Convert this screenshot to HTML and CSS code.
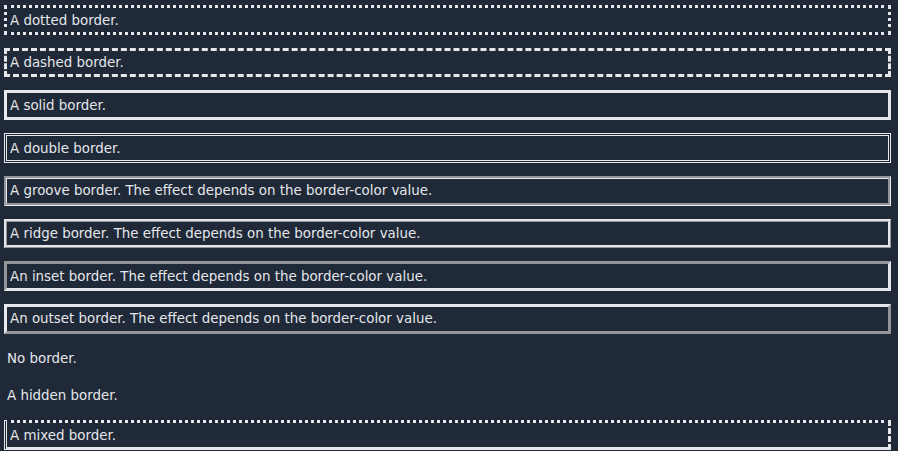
FILE: index.html
```
<!DOCTYPE html>
<html>
<head>
<meta charset="utf-8">
<link rel="stylesheet" href="styles.css">
</head>
<body>
<div class="list">
<p class="box dotted">A dotted border.</p>
<p class="box dashed">A dashed border.</p>
<p class="box solid">A solid border.</p>
<p class="box double">A double border.</p>
<p class="box groove">A groove border. The effect depends on the border-color value.</p>
<p class="box ridge">A ridge border. The effect depends on the border-color value.</p>
<p class="box inset">An inset border. The effect depends on the border-color value.</p>
<p class="box outset">An outset border. The effect depends on the border-color value.</p>
<p class="box none">No border.</p>
<p class="box hidden">A hidden border.</p>
<p class="box mix">A mixed border.</p>
</div>
</body>
</html>
```
FILE: styles.css
```
html, body {
  margin: 0;
  background: #1f2937;
}
body {
  font-family: "DejaVu Sans", Verdana, sans-serif;
  font-size: 13.4px;
  line-height: 17.7px;
  color: #e5e7eb;
}
.list {
  display: flex;
  flex-direction: column;
  gap: 13px;
  padding: 5px 7px 0 4px;
}
.box {
  margin: 0;
  padding: 3.5px 3px 2.5px;
  border: 3px solid #e5e7eb;
}
.dotted { border-style: dotted; }
.dashed { border-style: dashed; }
.solid { border-style: solid; }
.double { border-style: double; }
.groove { border-style: groove; }
.ridge { border-style: ridge; }
.inset { border-style: inset; }
.outset { border-style: outset; }
.none { border-style: none; }
.hidden { border-style: hidden; }
.mix { border-style: dotted dashed solid double; }
```
